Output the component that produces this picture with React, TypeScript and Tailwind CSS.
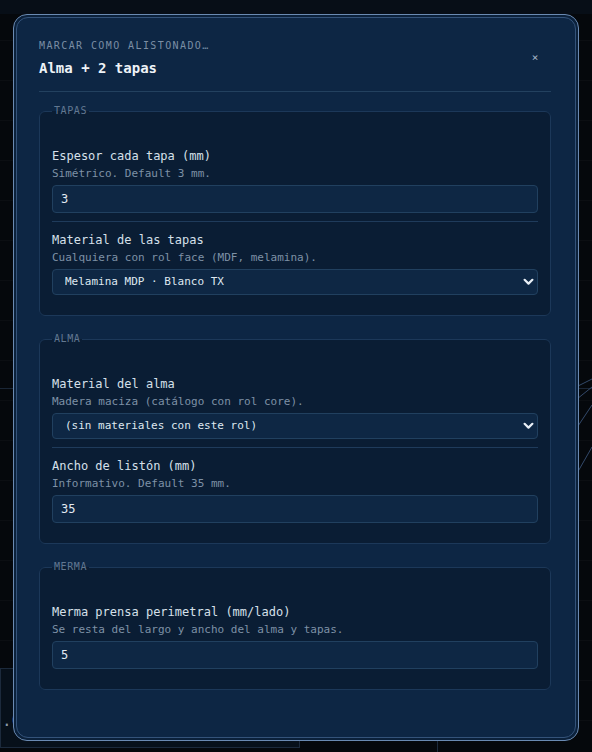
import React from "react";

const mono = "font-['DejaVu_Sans_Mono','Liberation_Mono',monospace]";

const Field = ({
  label,
  hint,
  children,
  divider,
  first,
}: {
  label: string;
  hint: string;
  children: React.ReactNode;
  divider?: boolean;
  first?: boolean;
}) => (
  <div
    className={`${first ? "" : "pt-[10px]"} ${
      divider ? "border-b border-[#1f3b5b] pb-2" : ""
    }`}
  >
    <div className="text-[12px] leading-[16px] text-[#d6e0ea]">{label}</div>
    <div className="mt-[3px] text-[11px] leading-[14px] text-[#7e91a6]">{hint}</div>
    <div className="mt-1">{children}</div>
  </div>
);

const TextInput = ({ value }: { value: string }) => (
  <input
    defaultValue={value}
    className="block h-7 w-full rounded-[4px] border border-[#21405f] bg-[#0e2744] px-2 text-[12px] text-[#e3eaf2] outline-none"
  />
);

const Select = ({ value, options }: { value: string; options: string[] }) => (
  <div className="relative">
    <select
      defaultValue={value}
      className="block h-[26px] w-full appearance-none rounded-[4px] border border-[#21405f] bg-[#0e2744] pl-3 pr-6 text-[11px] text-[#dfe7f0] outline-none"
    >
      {options.map((o) => (
        <option key={o}>{o}</option>
      ))}
    </select>
    <svg
      className="pointer-events-none absolute right-[4px] top-1/2 -translate-y-1/2"
      width="11"
      height="8"
      viewBox="0 0 11 8"
      fill="none"
    >
      <path
        d="M1.6 1.8 L5.5 5.6 L9.4 1.8"
        stroke="#e9eff6"
        strokeWidth="2.2"
        strokeLinecap="round"
        strokeLinejoin="round"
      />
    </svg>
  </div>
);

const Group = ({ title, children }: { title: string; children: React.ReactNode }) => (
  <fieldset className="rounded-[6px] border border-[#1c3859] bg-[#0a1d34] px-3 pt-[30px] pb-[20px]">
    <legend className="px-0.5 text-[10px] leading-[14px] tracking-[0.06em] text-[#627891]">
      {title}
    </legend>
    {children}
  </fieldset>
);

export default function App() {
  return (
    <div
      className={`${mono} relative flex h-[752px] justify-center overflow-hidden bg-[#05080c] pt-[14px] bg-[linear-gradient(to_bottom,#ffffff06_1px,transparent_1px)] bg-[size:40px_40px]`}
    >
      {/* backdrop bits of the app behind the dialog */}
      <div className="absolute inset-x-0 top-0 h-[14px] bg-[#070e17]" />
      <div className="absolute left-0 top-[388px] h-px w-full bg-[#1a2636]" />
      <div className="absolute left-0 top-[668px] h-[80px] w-[300px] border border-[#1c2a3c] bg-[#07101a]" />
      <div className="absolute left-[2px] top-[709px] text-[16px] text-[#8a98a8]">.0</div>
      <div className="absolute left-[437px] top-[738px] h-[14px] w-px bg-[#1c2a3c]" />
      <svg className="absolute right-0 top-[375px]" width="20" height="100" viewBox="0 0 20 100">
        <path d="M0 14 L20 4 M0 28 L20 12 M0 60 L20 30 M4 100 L20 72" stroke="#33496a" strokeWidth="1" />
      </svg>

      <div className="relative z-10 h-fit w-[566px] rounded-[14px] border border-[#6a8ab2] bg-[#0b213b] p-[2px]">
        <div className="rounded-[12px] border border-[#34537a] bg-[#0d2644] pl-[22px] pr-[24px] pt-[21px] pb-[47px]">
          <div className="flex items-center justify-between border-b border-[#23415f] pb-[13px]">
            <div>
              <div className="text-[10px] leading-[14px] tracking-[0.14em] text-[#7b8ea4]">
                MARCAR COMO ALISTONADO…
              </div>
              <h2 className="mt-[5px] text-[14px] font-bold leading-[20px] text-[#eef3f8]">
                Alma + 2 tapas
              </h2>
            </div>
            <button className="mr-[2px] flex h-7 w-7 items-center justify-center text-[11px] text-[#a9b8c8]">
              ×
            </button>
          </div>

          <div className="mt-3 flex flex-col gap-4">
            <Group title="TAPAS">
              <Field first divider label="Espesor cada tapa (mm)" hint="Simétrico. Default 3 mm.">
                <TextInput value="3" />
              </Field>
              <Field label="Material de las tapas" hint="Cualquiera con rol face (MDF, melamina).">
                <Select value="Melamina MDP · Blanco TX" options={["Melamina MDP · Blanco TX"]} />
              </Field>
            </Group>

            <Group title="ALMA">
              <Field first divider label="Material del alma" hint="Madera maciza (catálogo con rol core).">
                <Select value="(sin materiales con este rol)" options={["(sin materiales con este rol)"]} />
              </Field>
              <Field label="Ancho de listón (mm)" hint="Informativo. Default 35 mm.">
                <TextInput value="35" />
              </Field>
            </Group>

            <Group title="MERMA">
              <Field
                first
                label="Merma prensa perimetral (mm/lado)"
                hint="Se resta del largo y ancho del alma y tapas."
              >
                <TextInput value="5" />
              </Field>
            </Group>
          </div>
        </div>
      </div>
    </div>
  );
}
